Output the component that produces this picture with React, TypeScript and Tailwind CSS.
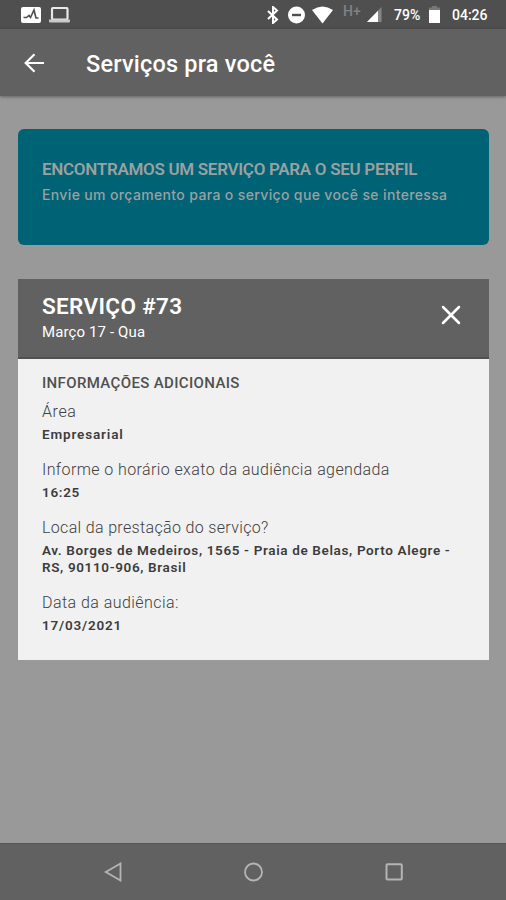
import React from "react";

const details = [
  { label: "Área", value: ["Empresarial"], labelClass: "tracking-[0.6px]", valueClass: "tracking-[0.85px]" },
  {
    label: "Informe o horário exato da audiência agendada",
    value: ["16:25"],
    labelClass: "tracking-[0.4px]",
    valueClass: "tracking-[0.7px]",
  },
  {
    label: "Local da prestação do serviço?",
    value: ["Av. Borges de Medeiros, 1565 - Praia de Belas, Porto Alegre -", "RS, 90110-906, Brasil"],
    labelClass: "tracking-[0.34px]",
    valueClass: "tracking-[0.64px]",
  },
  { label: "Data da audiência:", value: ["17/03/2021"], labelClass: "tracking-[0.45px]", valueClass: "tracking-[0.8px]" },
];

const StatusBar = () => (
  <div className="flex h-[29px] items-center bg-[#4f4f4f] pl-[21px] pr-[17px] text-white">
    <svg width="20" height="16" viewBox="0 0 20 16">
      <rect width="20" height="16" rx="2" fill="#fff" />
      <path d="M2.500 10.500h3L8 8.500l1.500 2L13 3l2 8h2.500" fill="none" stroke="#4f4f4f" strokeWidth="1.600" />
    </svg>
    <svg className="ml-[8px]" width="22" height="16" viewBox="0 0 22 16">
      <rect x="3" y="1" width="15.500" height="11.500" rx="1.200" fill="none" stroke="#e8e8e8" strokeWidth="2.200" />
      <path d="M0 12.500h21v1.500q0 1.500-1.300 1.500H1.300Q0 15.500 0 14z" fill="#c9c9c9" />
    </svg>
    <div className="flex-1" />
    <svg width="12" height="18" viewBox="0 0 12 18">
      <path d="M1 5l9 8.500L6 17V1l4 3.500L1 13" fill="none" stroke="#fff" strokeWidth="2" />
    </svg>
    <svg className="ml-[9px]" width="17" height="18" viewBox="0 0 17 18">
      <circle cx="8.500" cy="9" r="8.500" fill="#fff" />
      <path d="M4 9h9" stroke="#4f4f4f" strokeWidth="2.400" />
    </svg>
    <svg className="ml-[7px]" width="21" height="18" viewBox="0 0 21 18">
      <path d="M0 4Q10.500-3 21 4L10.500 17.500z" fill="#fff" />
    </svg>
    <span className="mb-[7px] ml-[10px] w-[19px] text-[14px] leading-none font-medium text-[#828282]">H+</span>
    <svg className="ml-[5px]" width="15" height="15" viewBox="0 0 15 15">
      <path d="M14.500 0v15H0z" fill="#868686" />
      <path d="M11 3.700V15H0z" fill="#fff" />
    </svg>
    <span className="ml-[12px] w-[27px] text-[14px] leading-none font-medium whitespace-nowrap">79%</span>
    <svg className="ml-[8px]" width="11" height="17" viewBox="0 0 11 17">
      <path d="M3 0h5v1.500h3V5H0V1.500h3z" fill="#777" />
      <path d="M0 4h11v13H0z" fill="#fff" />
    </svg>
    <span className="ml-[12px] w-[37px] text-[14px] leading-none font-medium whitespace-nowrap">04:26</span>
  </div>
);

const Toolbar = () => (
  <div className="flex h-[67px] items-center bg-[#616161] pl-[24px] text-white shadow-[0_1px_3px_rgba(0,0,0,0.35)]">
    <svg width="21" height="20" viewBox="0 0 21 20">
      <path d="M20 10H2M10.500 1.200L1.700 10l8.800 8.800" fill="none" stroke="#fff" strokeWidth="2.200" />
    </svg>
    <h1 className="mt-[4px] ml-[41px] text-[23.5px] tracking-[0.2px] font-medium whitespace-nowrap">
      Serviços pra você
    </h1>
  </div>
);

const NavigationBar = () => (
  <div className="flex h-[57px] items-center border-t border-[#555] bg-[#616161] pl-[104px]">
    <svg width="18" height="20" viewBox="0 0 18 20">
      <path d="M16.500 1.500v17L1.800 10z" fill="none" stroke="#b4b4b4" strokeWidth="1.800" />
    </svg>
    <svg className="ml-[122px]" width="20" height="20" viewBox="0 0 20 20">
      <circle cx="9.500" cy="10" r="8.500" fill="none" stroke="#b4b4b4" strokeWidth="1.800" />
    </svg>
    <svg className="ml-[121px]" width="18" height="18" viewBox="0 0 18 18">
      <rect x="1.500" y="1.200" width="15.300" height="15.300" rx="1" fill="none" stroke="#b4b4b4" strokeWidth="2" />
    </svg>
  </div>
);

const App = () => {
  return (
    <div className="flex h-[900px] w-[506px] flex-col overflow-hidden bg-[#999] font-['Roboto',sans-serif]">
      <StatusBar />
      <Toolbar />

      <main className="flex-1 px-[18px] pt-[33px]">
        {/* Banner */}
        <section className="h-[116px] w-[471px] rounded-[6px] bg-[#006275] px-6 pt-[30px] whitespace-nowrap text-[#9ba0a1]">
          <h2 className="text-[17px] leading-5 font-semibold tracking-[-0.3px]">
            ENCONTRAMOS UM SERVIÇO PARA O SEU PERFIL
          </h2>
          <p className="mt-[6px] font-['Inter',sans-serif] text-[14px] leading-5 font-medium tracking-[0.36px]">
            Envie um orçamento para o serviço que você se interessa
          </p>
        </section>

        {/* Service card */}
        <section className="mt-[34px] h-[381px] w-[471px] bg-[#f1f1f1]">
          <header className="flex h-[80px] justify-between border-b-2 border-[#515151] bg-[#616161] pr-[28px] pl-6 text-white">
            <div className="pt-[15px] whitespace-nowrap">
              <h2 className="text-[22.5px] leading-6 font-semibold tracking-[0.35px]">SERVIÇO #73</h2>
              <p className="mt-[4px] text-[15px] leading-5 tracking-[0.12px]">Março 17 - Qua</p>
            </div>
            <svg className="mt-[26px]" width="20" height="20" viewBox="0 0 20 20">
              <path d="M2 2l16 16M18 2L2 18" stroke="#fff" strokeWidth="2.500" strokeLinecap="round" />
            </svg>
          </header>

          <div className="px-6 pt-[14px] whitespace-nowrap">
            <h3 className="mb-[9px] text-[15px] leading-5 font-medium tracking-[0.36px] text-[#505050]">
              INFORMAÇÕES ADICIONAIS
            </h3>
            {details.map((item) => (
              <div key={item.label} className="mb-[17px]">
                <p className={`text-[16px] leading-5 font-light text-[#404040] ${item.labelClass}`}>{item.label}</p>
                <div className={`mt-[4px] text-[13.5px] leading-[17px] font-semibold text-[#3c3c3c] ${item.valueClass}`}>
                  {item.value.map((line) => (
                    <p key={line}>{line}</p>
                  ))}
                </div>
              </div>
            ))}
          </div>
        </section>
      </main>

      <NavigationBar />
    </div>
  );
};

export default App;
